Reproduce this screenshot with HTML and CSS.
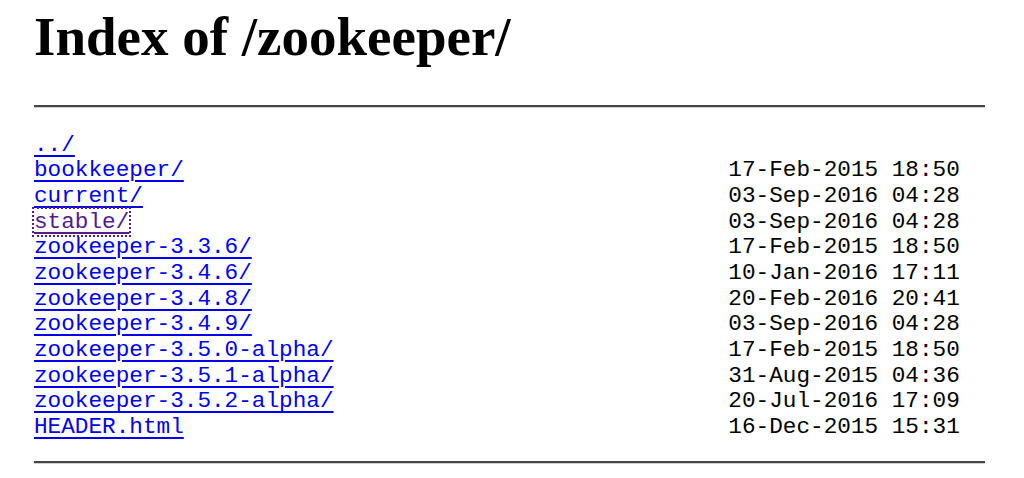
FILE: index.html
```html
<!DOCTYPE html>
<html>
<head>
<meta charset="utf-8">
<title>Index of /zookeeper/</title>
<link rel="stylesheet" href="styles.css">
</head>
<body class="page">
<h1 class="title">Index of /zookeeper/</h1>
<hr class="rule">
<pre class="listing"><a class="entry" href="../">../</a>
<a class="entry" href="bookkeeper/">bookkeeper/</a>                                        17-Feb-2015 18:50
<a class="entry" href="current/">current/</a>                                           03-Sep-2016 04:28
<a class="entry entry-visited" href="stable/">stable/</a>                                            03-Sep-2016 04:28
<a class="entry" href="zookeeper-3.3.6/">zookeeper-3.3.6/</a>                                   17-Feb-2015 18:50
<a class="entry" href="zookeeper-3.4.6/">zookeeper-3.4.6/</a>                                   10-Jan-2016 17:11
<a class="entry" href="zookeeper-3.4.8/">zookeeper-3.4.8/</a>                                   20-Feb-2016 20:41
<a class="entry" href="zookeeper-3.4.9/">zookeeper-3.4.9/</a>                                   03-Sep-2016 04:28
<a class="entry" href="zookeeper-3.5.0-alpha/">zookeeper-3.5.0-alpha/</a>                             17-Feb-2015 18:50
<a class="entry" href="zookeeper-3.5.1-alpha/">zookeeper-3.5.1-alpha/</a>                             31-Aug-2015 04:36
<a class="entry" href="zookeeper-3.5.2-alpha/">zookeeper-3.5.2-alpha/</a>                             20-Jul-2016 17:09
<a class="entry" href="HEADER.html">HEADER.html</a>                                        16-Dec-2015 15:31
</pre>
<hr class="rule">
</body>
</html>
```

FILE: styles.css
```css
html, body {
  background: #ffffff;
}

.page {
  margin: 0;
  padding: 0 39px 0 34px;
  color: #000000;
  overflow: hidden;
}

.title {
  margin: 5px 0 36px;
  font-family: "Liberation Serif", "Times New Roman", serif;
  font-weight: bold;
  font-size: 55px;
  line-height: 64px;
  white-space: nowrap;
}

.rule {
  margin: 0;
  height: 0;
  border: none;
  border-top: 2px solid #454545;
  border-bottom: 1px solid #cfcfcf;
}

.listing {
  margin: 24.5px 0 20.5px;
  font-family: "Liberation Mono", "Courier New", monospace;
  font-size: 22.7px;
  line-height: 25.67px;
  white-space: pre;
}

.entry {
  color: #0000ee;
  text-decoration: underline;
  text-decoration-thickness: 2px;
  text-underline-offset: 4px;
}

.entry-visited {
  color: #551a8b;
  outline: 2px dotted #551a8b;
  outline-offset: 0;
}
```
